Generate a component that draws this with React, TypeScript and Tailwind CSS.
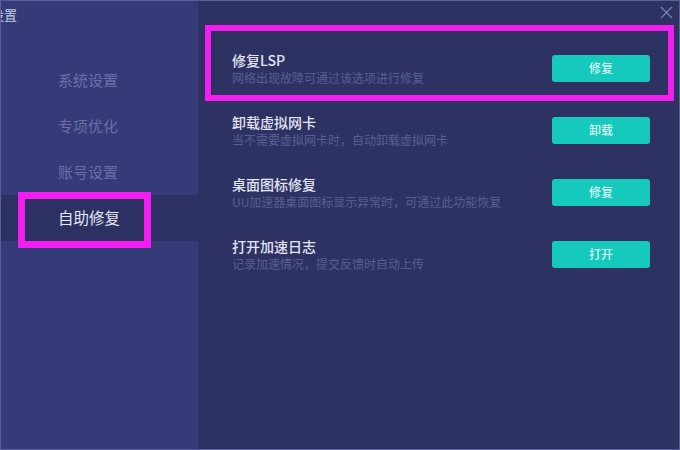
import React from 'react';

interface RepairItem {
    title: string;
    desc: string;
    action: string;
}

const navItems = ['系统设置', '专项优化', '账号设置', '自助修复'];

const repairItems: RepairItem[] = [
    { title: '修复LSP', desc: '网络出现故障可通过该选项进行修复', action: '修复' },
    { title: '卸载虚拟网卡', desc: '当不需要虚拟网卡时，自动卸载虚拟网卡', action: '卸载' },
    { title: '桌面图标修复', desc: 'UU加速器桌面图标显示异常时，可通过此功能恢复', action: '修复' },
    { title: '打开加速日志', desc: '记录加速情况，提交反馈时自动上传', action: '打开' },
];

export default function App() {
    const active = '自助修复';

    return (
        <div
            className="relative w-[680px] h-[450px] overflow-hidden flex border border-[#5a5e9c] bg-[#2e3263]"
            style={{ fontFamily: '"Noto Sans CJK SC", "Noto Sans", sans-serif' }}
        >
            {/* 侧边栏 */}
            <div className="w-[197px] shrink-0 h-full bg-[#353a78] flex flex-col">
                <div className="h-[56px] pt-[5px]">
                    <span className="block -ml-[10px] text-[13px] leading-[18px] text-[#c8cbe4]">设置</span>
                </div>
                {navItems.map(name => (
                    <div
                        key={name}
                        className={
                            name === active
                                ? 'h-[46px] flex items-center pl-[57px] bg-[#2c3062] text-[#e4e6f3] text-[15.5px]'
                                : 'h-[46px] flex items-center pl-[57px] text-[#6a6fa8] text-[15px]'
                        }
                    >
                        {name}
                    </div>
                ))}
            </div>

            {/* 内容 */}
            <div className="flex-1 h-full flex flex-col pt-[36px] pl-[34px] pr-[29px]">
                {repairItems.map(item => (
                    <div key={item.title} className="h-[62px] flex items-center justify-between">
                        <div>
                            <p className="text-[14px] leading-[20px] font-medium text-[#e2e4f2]">{item.title}</p>
                            <p className="text-[12px] leading-[16px] text-[#585e94]">{item.desc}</p>
                        </div>
                        <button className="w-[98px] h-[27px] rounded-[3px] bg-[#15c9bd] text-[12px] font-medium text-[#d9f6f3]">
                            {item.action}
                        </button>
                    </div>
                ))}
            </div>

            {/* 关闭 */}
            <svg className="absolute right-[6px] top-[5px]" width="13" height="13" viewBox="0 0 13 13">
                <path d="M1 1L12 12M12 1L1 12" stroke="#7a7eac" strokeWidth="1.4" />
            </svg>

            {/* 标注框 */}
            <div className="absolute left-[204px] top-[24px] w-[469px] h-[76px] border-[6px] border-[#f21ef0]"></div>
            <div className="absolute left-[17px] top-[191px] w-[133px] h-[56px] border-[7px] border-[#f21ef0]"></div>
        </div>
    );
}
